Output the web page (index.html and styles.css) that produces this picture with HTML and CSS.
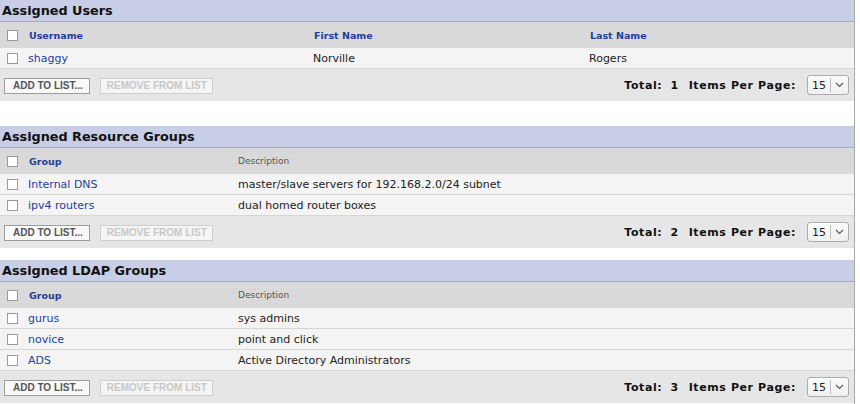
FILE: index.html
```html
<!DOCTYPE html>
<html>
<head>
<meta charset="utf-8">
<link rel="stylesheet" href="styles.css">
</head>
<body>
<div class="page">
  <section class="panel panel-users">
    <h2 class="panel-title">Assigned Users</h2>
    <div class="row head cols-users">
      <span class="cell-cb"><span class="cb"></span></span>
      <span class="th">Username</span>
      <span class="th">First Name</span>
      <span class="th">Last Name</span>
    </div>
    <div class="row data cols-users">
      <span class="cell-cb"><span class="cb"></span></span>
      <a class="link">shaggy</a>
      <span>Norville</span>
      <span>Rogers</span>
    </div>
    <div class="footer">
      <div class="actions">
        <button class="btn">ADD TO LIST...</button>
        <button class="btn disabled">REMOVE FROM LIST</button>
      </div>
      <div class="pager">
        <span class="total">Total:</span><span class="num">1</span><span class="ipp">Items Per Page:</span>
        <span class="select"><span class="sel-val">15</span><span class="sel-arrow"><svg width="9" height="6" viewBox="0 0 9 6"><path d="M1 1 L4.5 4.5 L8 1" fill="none" stroke="#555" stroke-width="1.1"/></svg></span></span>
      </div>
    </div>
  </section>

  <section class="panel panel-res">
    <h2 class="panel-title">Assigned Resource Groups</h2>
    <div class="row head cols-groups">
      <span class="cell-cb"><span class="cb"></span></span>
      <span class="th">Group</span>
      <span class="th-plain">Description</span>
    </div>
    <div class="row data cols-groups">
      <span class="cell-cb"><span class="cb"></span></span>
      <a class="link">Internal DNS</a>
      <span>master/slave servers for 192.168.2.0/24 subnet</span>
    </div>
    <div class="row data cols-groups">
      <span class="cell-cb"><span class="cb"></span></span>
      <a class="link">ipv4 routers</a>
      <span>dual homed router boxes</span>
    </div>
    <div class="footer">
      <div class="actions">
        <button class="btn">ADD TO LIST...</button>
        <button class="btn disabled">REMOVE FROM LIST</button>
      </div>
      <div class="pager">
        <span class="total">Total:</span><span class="num">2</span><span class="ipp">Items Per Page:</span>
        <span class="select"><span class="sel-val">15</span><span class="sel-arrow"><svg width="9" height="6" viewBox="0 0 9 6"><path d="M1 1 L4.5 4.5 L8 1" fill="none" stroke="#555" stroke-width="1.1"/></svg></span></span>
      </div>
    </div>
  </section>

  <section class="panel panel-ldap">
    <h2 class="panel-title">Assigned LDAP Groups</h2>
    <div class="row head cols-groups">
      <span class="cell-cb"><span class="cb"></span></span>
      <span class="th">Group</span>
      <span class="th-plain">Description</span>
    </div>
    <div class="row data cols-groups">
      <span class="cell-cb"><span class="cb"></span></span>
      <a class="link">gurus</a>
      <span>sys admins</span>
    </div>
    <div class="row data cols-groups">
      <span class="cell-cb"><span class="cb"></span></span>
      <a class="link">novice</a>
      <span>point and click</span>
    </div>
    <div class="row data cols-groups">
      <span class="cell-cb"><span class="cb"></span></span>
      <a class="link">ADS</a>
      <span>Active Directory Administrators</span>
    </div>
    <div class="footer">
      <div class="actions">
        <button class="btn">ADD TO LIST...</button>
        <button class="btn disabled">REMOVE FROM LIST</button>
      </div>
      <div class="pager">
        <span class="total">Total:</span><span class="num">3</span><span class="ipp">Items Per Page:</span>
        <span class="select"><span class="sel-val">15</span><span class="sel-arrow"><svg width="9" height="6" viewBox="0 0 9 6"><path d="M1 1 L4.5 4.5 L8 1" fill="none" stroke="#555" stroke-width="1.1"/></svg></span></span>
      </div>
    </div>
  </section>
</div>
</body>
</html>
```

FILE: styles.css
```css
html, body {
  margin: 0;
  padding: 0;
  background: #ffffff;
}
body {
  font-family: "DejaVu Sans", Verdana, sans-serif;
  font-size: 11px;
  color: #222222;
}
.page {
  width: 854px;
  border-right: 1px solid #a8a8a8;
  min-height: 404px;
}
.panel-users { margin-bottom: 25px; }
.panel-res { margin-bottom: 12px; }

.panel-title {
  margin: 0;
  height: 21px;
  line-height: 22px;
  padding-left: 2px;
  font-size: 12.8px;
  font-weight: bold;
  color: #111111;
  background: #c7cee6;
  border-bottom: 1px solid #a3aac4;
}
.row {
  display: grid;
  align-items: center;
}
.cols-users { grid-template-columns: 28px 285px 276px 1fr; }
.cols-groups { grid-template-columns: 28px 210px 1fr; }
.row.head {
  height: 26px;
  background: #d9d9d9;
}
.row.data {
  height: 20px;
  background: #f4f4f4;
  border-bottom: 1px solid #d6d6d6;
}
.cell-cb {
  display: flex;
  align-items: center;
  padding-left: 7px;
}
.cb {
  display: block;
  width: 9px;
  height: 9px;
  border: 1px solid #9a9a9a;
  background: #ffffff;
}
.th {
  font-size: 9.5px;
  font-weight: bold;
  color: #1d3e9e;
  padding-left: 1px;
}
.th-plain {
  font-size: 9px;
  color: #555555;
}
.link {
  color: #1f409c;
  text-decoration: none;
}
.footer {
  height: 32px;
  background: #e6e6e6;
  display: flex;
  align-items: center;
  justify-content: space-between;
  padding: 0 5px 0 4px;
}
.actions {
  display: flex;
  gap: 10px;
  align-items: center;
}
.btn {
  font-family: "Liberation Sans", Arial, sans-serif;
  font-size: 10px;
  font-weight: bold;
  color: #555555;
  background: #f9f9f9;
  border: 1px solid #9c9c9c;
  height: 16px;
  padding: 0 6px 0 8px;
  line-height: 14px;
  margin: 1px 0 0 0;
  border-radius: 0;
}
.btn.disabled {
  color: #c8c8c8;
  border-color: #cfcfcf;
  background: #f5f5f5;
  padding: 0 5px 0 6px;
}
.pager {
  display: flex;
  align-items: center;
  font-weight: bold;
  font-size: 11px;
  letter-spacing: 0.6px;
  color: #111111;
  white-space: nowrap;
}
.num {
  margin-left: 8px;
  margin-right: 10px;
}
.select {
  margin-left: 11px;
  display: flex;
  align-items: stretch;
  height: 18px;
  border: 1px solid #adadad;
  border-radius: 3px;
  background: linear-gradient(#fbfbfb, #f0f0f0);
  font-weight: normal;
  font-size: 11px;
  letter-spacing: 0;
  color: #222;
}
.sel-val {
  display: flex;
  align-items: center;
  padding: 0 4px 0 4px;
  border-right: 1px solid #bdbdbd;
  margin: 2px 0;
}
.sel-arrow {
  display: flex;
  align-items: center;
  padding: 0 4px 0 4px;
}
```
